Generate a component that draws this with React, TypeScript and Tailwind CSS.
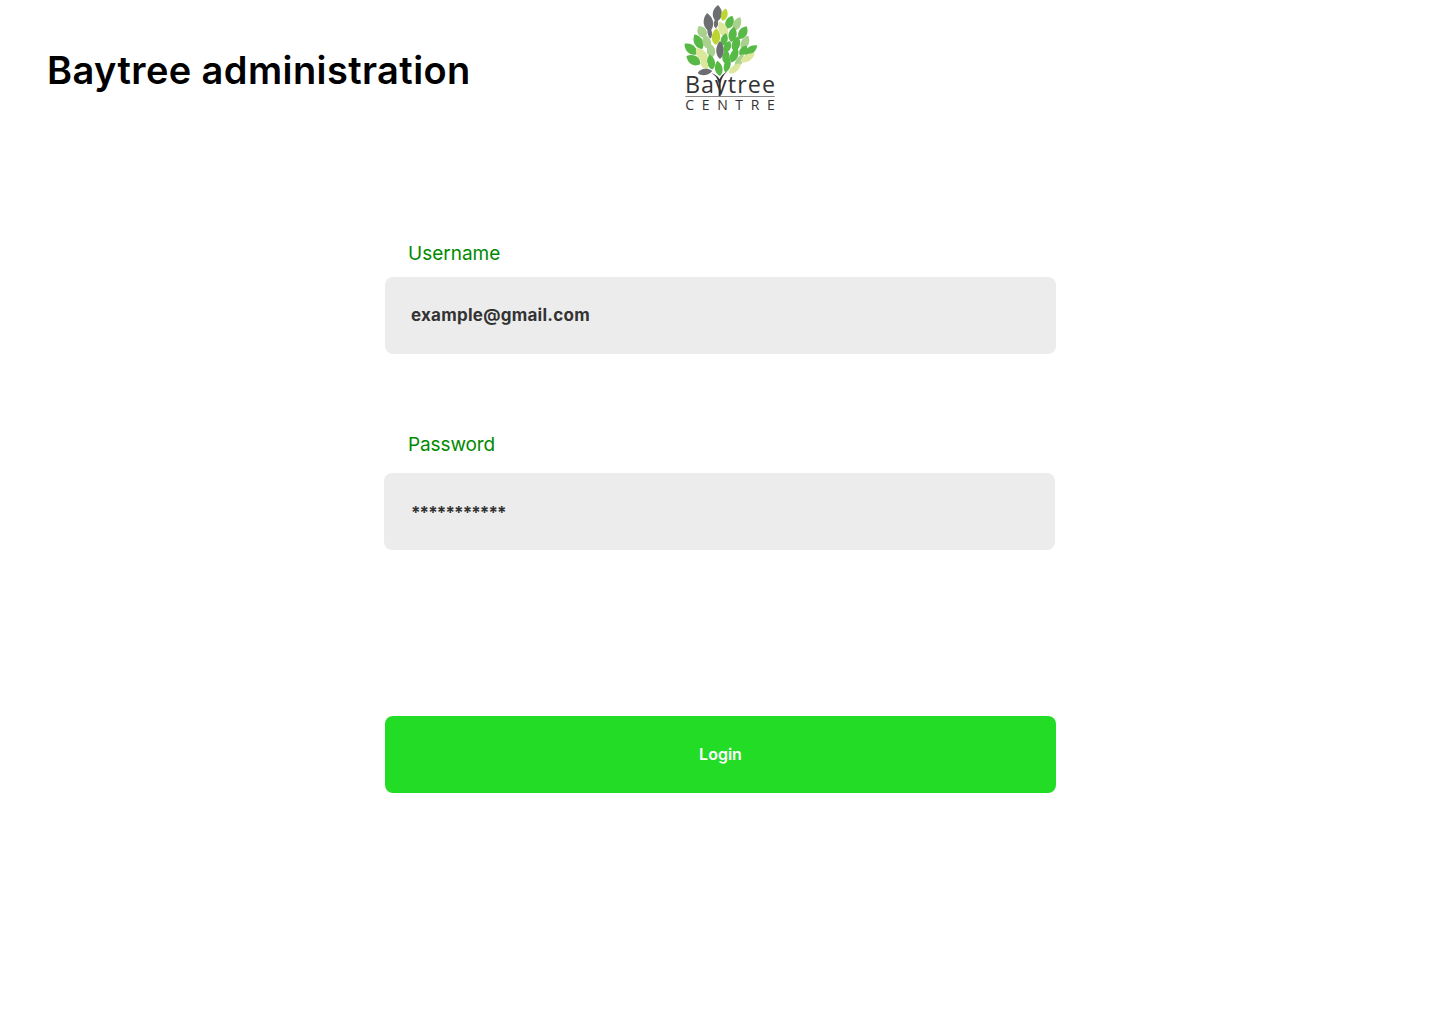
const G = "#58b947", L = "#a9d18e", Y = "#dbe79a", O = "#bcd531", D = "#6d6e71";

const leaves: [number, number, number, number, number, string][] = [
  [142, 40, 50, 29, 5, D],
  [115, 67, 56, 30, -8, D],
  [138, 70, 30, 14, 5, D],
  [163, 44, 38, 21, 15, O],
  [179, 67, 42, 26, 22, G],
  [201, 72, 46, 25, 25, L],
  [159, 88, 52, 28, -25, Y],
  [96, 95, 40, 29, -30, L],
  [119, 97, 38, 14, -8, D],
  [138, 110, 50, 27, 3, O],
  [163, 118, 38, 22, 15, G],
  [188, 103, 46, 26, 10, G],
  [219, 98, 44, 27, 30, G],
  [85, 125, 50, 28, -28, G],
  [110, 125, 46, 27, -18, L],
  [150, 150, 54, 24, 0, D],
  [172, 140, 38, 23, 25, G],
  [198, 132, 48, 26, 15, G],
  [225, 127, 46, 25, 25, L],
  [62, 147, 48, 28, -50, G],
  [95, 165, 52, 30, -40, Y],
  [123, 152, 42, 27, -8, L],
  [243, 150, 46, 23, 55, G],
  [220, 152, 36, 22, 35, G],
  [193, 165, 48, 25, 22, G],
  [168, 170, 42, 24, 5, G],
  [70, 180, 48, 30, -60, G],
  [123, 186, 46, 25, -10, G],
  [146, 205, 46, 24, -10, G],
  [172, 195, 46, 21, 15, G],
  [208, 183, 48, 21, 30, L],
  [233, 173, 50, 22, 60, Y],
  [103, 192, 34, 22, -25, Y],
  [195, 205, 46, 21, 50, Y],
  [105, 216, 44, 20, 82, D],
];

function Logo() {
  return (
    <svg width={120} height={120} viewBox="0 0 360 360" className="block shrink-0">
      <defs>
        <clipPath id="wordmark">
          <rect x="0" y="220" width="360" height="64" />
        </clipPath>
      </defs>
      {leaves.map(([x, y, l, w, r, c], i) => (
        <path
          key={i}
          transform={`translate(${x} ${y}) rotate(${r})`}
          d={`M0 ${-l / 2} C${w * 0.7} ${-l / 6} ${w * 0.55} ${l / 3} 0 ${l / 2} C${-w * 0.55} ${l / 3} ${-w * 0.7} ${-l / 6} 0 ${-l / 2} Z`}
          fill={c}
        />
      ))}
      <text x="45" y="280" clipPath="url(#wordmark)" fontFamily="'Open Sans', sans-serif" fontSize="70" fill="#333" textLength="270" lengthAdjust="spacing">Baytree</text>
      <path d="M124 220 Q140 226 146 250 L146 288 L152 288 L152 250 Q156 228 172 214 Q152 226 149 238 Q140 224 124 220 Z" fill="#333" />
      <rect x="46" y="288" width="268" height="3" fill="#888" />
      <text x="46" y="330" fontFamily="'Open Sans', sans-serif" fontSize="42" fill="#333" textLength="268">CENTRE</text>
    </svg>
  );
}

export default function App() {
  return (
    <div className="min-h-[1024px] bg-white font-['Inter',sans-serif]">
      <header className="flex h-[120px] items-start">
        <h1 className="ml-[47px] mt-[47px] w-[623px] text-[38px] leading-[46px] font-semibold tracking-[0.4px] text-black">
          Baytree administration
        </h1>
        <Logo />
      </header>
      <main className="ml-[385px] w-[671px] pt-[120px]">
        <label className="ml-[23px] block pt-px text-[19px] leading-[25px] text-[#008a00]">Username</label>
        <div className="mt-[11px] flex h-[77px] items-center rounded-[8px] bg-[#ececec] pl-[26px] text-[17px] font-bold tracking-[0.25px] text-[#333]">
          example@gmail.com
        </div>
        <label className="ml-[23px] mt-[77px] block pt-px text-[19px] leading-[25px] tracking-[-0.1px] text-[#008a00]">Password</label>
        <div className="-ml-px mr-px mt-[16px] flex h-[77px] items-center rounded-[8px] bg-[#ececec] pl-[27px] text-[17px] font-bold tracking-[-0.9px] text-[#333]">
          <span className="pt-[4px]">***********</span>
        </div>
        <button className="mt-[166px] flex h-[77px] w-full items-center justify-center rounded-[8px] bg-[#22dc25] pb-[2px] text-[16px] font-semibold text-white">
          Login
        </button>
      </main>
    </div>
  );
}
